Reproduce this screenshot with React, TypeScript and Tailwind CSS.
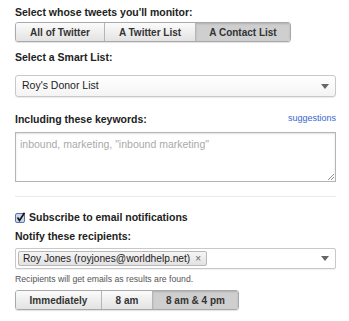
import React from "react";

const font = { fontFamily: '"Liberation Sans", Arial, Helvetica, sans-serif' };

function Seg({ items, active, widths }: { items: string[]; active: number; widths: number[] }) {
  return (
    <div className="flex h-[20px] rounded-[3px] border border-[#a9a9a9] shadow-[0_1px_1px_rgba(0,0,0,0.12)] overflow-hidden self-start">
      {items.map((t, i) => (
        <div
          key={t}
          style={{ width: widths[i] }}
          className={
            "flex items-center justify-center text-[10px] font-bold text-[#333] " +
            (i > 0 ? "border-l border-[#b5b5b5] " : "") +
            (i === active
              ? "bg-[#cfcfcf] shadow-[inset_0_1px_2px_rgba(0,0,0,0.15)]"
              : "bg-gradient-to-b from-[#fbfbfb] to-[#e3e3e3]")
          }
        >
          {t}
        </div>
      ))}
    </div>
  );
}

function Arrow() {
  return (
    <svg width="8" height="5" viewBox="0 0 8 5" className="ml-auto mr-[6px]">
      <path d="M0 0 L8 0 L4 5 Z" fill="#666" />
    </svg>
  );
}

export default function App() {
  return (
    <div style={font} className="w-[349px] h-[321px] bg-white pl-[15px] pr-[13px] pt-[5px] flex flex-col text-[#222]">
      <div className="text-[10.5px] font-bold leading-[14px]">Select whose tweets you'll monitor:</div>
      <div className="mt-[3px] flex">
        <Seg items={["All of Twitter", "A Twitter List", "A Contact List"]} active={2} widths={[88, 91, 95]} />
      </div>
      <div className="mt-[8px] text-[10.5px] font-bold leading-[14px]">Select a Smart List:</div>
      <div className="mt-[11px] h-[22px] rounded-[3px] border border-[#c8c8c8] bg-gradient-to-b from-white to-[#f4f4f4] shadow-[0_1px_1px_rgba(0,0,0,0.08)] flex items-center pl-[6px] text-[10.5px] text-[#222]">
        Roy's Donor List
        <Arrow />
      </div>
      <div className="mt-[14px] flex items-end justify-between leading-[14px]">
        <span className="text-[10.5px] font-bold">Including these keywords:</span>
        <span className="text-[9px] text-[#3a66d0] mb-[1px]">suggestions</span>
      </div>
      <div className="mt-[6px] h-[50px] border border-[#b5b5b5] shadow-[inset_0_1px_2px_rgba(0,0,0,0.12)] relative pl-[4px] pt-[4px] text-[10.5px] leading-[14px] text-[#aaa]">
        inbound, marketing, "inbound marketing"
        <svg width="7" height="7" viewBox="0 0 7 7" className="absolute right-[1px] bottom-[1px]">
          <path d="M1 7 L7 1 M4 7 L7 4" stroke="#777" strokeWidth="0.8" />
        </svg>
      </div>
      <div className="mt-[14px] h-[1px] bg-[#eaeaea]" />
      <div className="mt-[13px] flex items-center gap-[3px] leading-[14px]">
        <svg width="11" height="11" viewBox="0 0 11 11">
          <rect x="0.5" y="1.5" width="9" height="9" rx="1.5" fill="#c9d6ee" stroke="#5b74a8" />
          <path d="M2.5 5.5 L4.5 8.5 L9.5 0.8" stroke="#111" strokeWidth="1.6" fill="none" />
        </svg>
        <span className="text-[10.5px] font-bold">Subscribe to email notifications</span>
      </div>
      <div className="mt-[5px] text-[10.5px] font-bold leading-[14px]">Notify these recipients:</div>
      <div className="mt-[5px] h-[21px] rounded-[2px] border border-[#c8c8c8] bg-white shadow-[0_1px_1px_rgba(0,0,0,0.06)] flex items-center pl-[2px]">
        <div className="h-[15px] rounded-[2px] border border-[#b8b8b8] bg-gradient-to-b from-[#f5f5f5] to-[#e2e2e2] flex items-center pl-[4px] pr-[5px] text-[10.2px] text-[#222] leading-[13px] whitespace-nowrap">
          Roy Jones (royjones@worldhelp.net)
          <span className="ml-[5px] text-[10px] text-[#666]">×</span>
        </div>
        <Arrow />
      </div>
      <div className="mt-[5px] text-[8.7px] leading-[10px] text-[#555]">Recipients will get emails as results are found.</div>
      <div className="mt-[6px] flex">
        <Seg items={["Immediately", "8 am", "8 am & 4 pm"]} active={2} widths={[85, 51, 86]} />
      </div>
    </div>
  );
}
